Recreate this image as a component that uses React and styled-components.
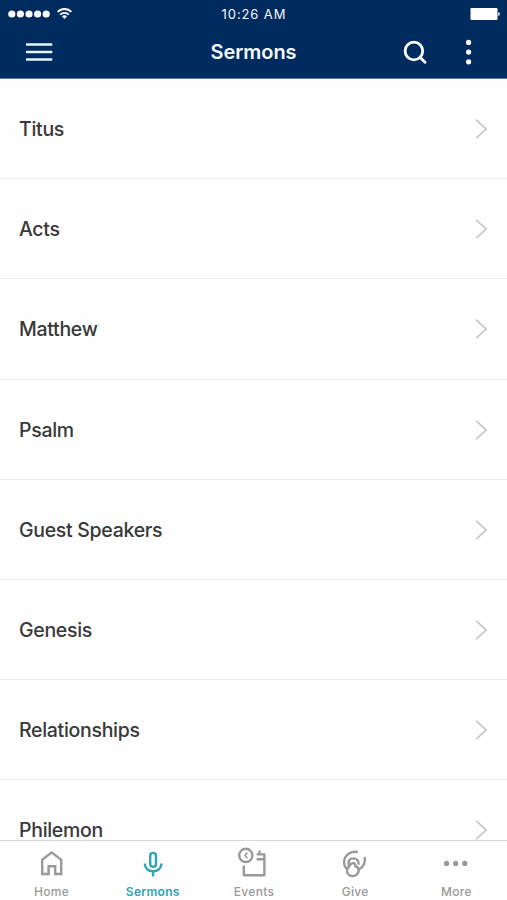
import React from 'react';
import styled, { createGlobalStyle } from 'styled-components';

const GlobalStyle = createGlobalStyle`
    * {
        box-sizing: border-box;
    }
    body {
        margin: 0;
        background: #fefefe;
        font-family: Inter, "Liberation Sans", sans-serif;
    }
`;

const Screen = styled.div`
    display: flex;
    flex-direction: column;
    height: 100vh;
    overflow: hidden;
`;

const Header = styled.header`
    flex: none;
    height: 79px;
    background: #002b5f;
    border-bottom: 1px solid #5f7f9f;
    color: #f3f8ff;
`;

const StatusBar = styled.div`
    display: grid;
    grid-template-columns: 1fr auto 1fr;
    align-items: center;
    height: 27px;
    padding: 0 7px 0 8px;
`;

const Signal = styled.div`
    display: flex;
    align-items: center;
    gap: 7px;
`;

const Time = styled.div`
    font-size: 13px;
    font-weight: 400;
    letter-spacing: 0.9px;
    line-height: 16px;
`;

const Battery = styled.svg`
    justify-self: end;
`;

const NavBar = styled.div`
    display: grid;
    grid-template-columns: 1fr auto 1fr;
    align-items: center;
    height: 50px;
    padding: 0 34px 0 25px;
`;

const Title = styled.h1`
    margin: 0;
    padding-left: 9px;
    font-size: 20px;
    font-weight: 600;
    line-height: 24px;
    letter-spacing: -0.05px;
`;

const Actions = styled.div`
    display: flex;
    justify-content: flex-end;
    align-items: center;
    gap: 38px;
`;

const List = styled.ul`
    flex: 1;
    min-height: 0;
    margin: 0;
    padding: 0;
    overflow: hidden;
    list-style: none;
`;

const Row = styled.li`
    display: flex;
    justify-content: space-between;
    align-items: center;
    height: 100.2px;
    padding: 1px 19px 0 19px;
    border-bottom: 1px solid #ebebeb;
    color: #383838;
    font-size: 19.5px;
    font-weight: 500;
    letter-spacing: -0.3px;
    line-height: 24px;
`;

const TabBar = styled.nav`
    flex: none;
    display: grid;
    grid-template-columns: repeat(5, 1fr);
    height: 60px;
    padding-left: 1px;
    border-top: 1px solid #d8d8d8;
`;

const Tab = styled.div`
    display: flex;
    flex-direction: column;
    align-items: center;
    padding-top: 5px;
    color: ${(props) => (props.$active ? '#2fa5b5' : '#999')};
    font-size: 12px;
    font-weight: ${(props) => (props.$active ? 600 : 500)};
    letter-spacing: 0.3px;
    line-height: 16px;
`;

const TabIcon = styled.svg`
    display: block;
    width: 36px;
    height: 36px;
    margin-bottom: 2px;
    fill: none;
    stroke: currentColor;
    stroke-width: 2.4;
`;

const sermons = ['Titus', 'Acts', 'Matthew', 'Psalm', 'Guest Speakers', 'Genesis', 'Relationships', 'Philemon'];

const tabs = [
    {
        label: 'Home',
        icon: <path d="M8.2 13.8 17.7 6.4 27.2 13.8V28H21.2V20.2H14.6V28H8.2Z" />,
    },
    {
        label: 'Sermons',
        active: true,
        icon: (
            <>
                <rect x="15.2" y="6.9" width="5.8" height="14" rx="2.9" />
                <path d="M9.8 17.5C9.8 22.5 13.5 25.2 18.1 25.2S26.4 22.5 26.4 17.5M18.1 25.2V30.5" />
            </>
        ),
    },
    {
        label: 'Events',
        icon: (
            <>
                <circle cx="9.8" cy="9.4" r="6.6" />
                <path d="M11.4 6.6 9 9.4 11.4 12.2" strokeWidth="1.6" />
                <path d="M7.8 19.5V29.2H28.4V8.4H20.6M23.6 4.6V8.4M20.6 13.2H28.4" strokeLinejoin="round" />
            </>
        ),
    },
    {
        label: 'Give',
        icon: (
            <>
                <path d="M20.8 6C13 4.4 7.1 10 7.1 16.3C7.1 19.6 8.4 22 10.8 23.8" />
                <path d="M12.2 20C10.2 15 13 12.2 16.6 12.4C20 12.6 22.2 15.2 21.4 18.8" />
                <path d="M12.4 19.8C14.4 17 17.2 16 18.2 18.6C18.4 19.4 18.2 20 17.6 20.6" />
                <path d="M13 20.2C9.6 21.6 9.2 26 11.4 28.4C14 31 18.8 30.6 20.8 27.4C21.6 26 21.8 24.8 21.6 23.6C25.8 21.6 28.4 16.8 27.8 10.8" />
                <path d="M17.6 20.6C20 20.2 21.4 21.6 21.6 23.6" />
            </>
        ),
    },
    {
        label: 'More',
        icon: (
            <g fill="currentColor" stroke="none">
                <circle cx="8.6" cy="17.4" r="2.6" />
                <circle cx="17.7" cy="17.4" r="2.6" />
                <circle cx="26.8" cy="17.4" r="2.6" />
            </g>
        ),
    },
];

const App = () => {
    return (
        <Screen>
            <GlobalStyle />
            <Header>
                <StatusBar>
                    <Signal>
                        <svg width="42" height="8" fill="#fff">
                            {[3.8, 12.4, 21, 29.6, 38.2].map((x) => (
                                <circle key={x} cx={x} cy="4" r="3.6" />
                            ))}
                        </svg>
                        <svg width="15" height="13" viewBox="0 0 15 13" fill="none" stroke="#fff" strokeWidth="1.9">
                            <path d="M.7 4.9C4.5 1 10.5 1 14.3 4.9M3.2 7.7C5.6 5.3 9.4 5.3 11.8 7.7" />
                            <path d="M7.5 12 4.9 9.3C6.4 8 8.6 8 10.1 9.3Z" fill="#fff" stroke="none" />
                        </svg>
                    </Signal>
                    <Time>10:26 AM</Time>
                    <Battery width="30" height="12" fill="#fff">
                        <rect x="0.5" width="27" height="12" rx="1" />
                        <path d="M28.3 4C30.3 4.5 30.3 7.5 28.3 8Z" />
                    </Battery>
                </StatusBar>
                <NavBar>
                    <svg width="28" height="20" stroke="#eaf6ff" strokeWidth="2.4" strokeLinecap="round">
                        <path d="M2 2.5H26.3M2 10H26.3M2 17.5H26.3" />
                    </svg>
                    <Title>Sermons</Title>
                    <Actions>
                        <svg width="24" height="24" fill="none" stroke="#fff" strokeWidth="2.8" strokeLinecap="round">
                            <circle cx="10.9" cy="11" r="8.8" />
                            <path d="M17.5 17.8 22 22.2" />
                        </svg>
                        <svg width="8" height="26" fill="#fff">
                            <circle cx="3.6" cy="3.4" r="2.6" />
                            <circle cx="3.6" cy="13.1" r="2.6" />
                            <circle cx="3.6" cy="22.8" r="2.6" />
                        </svg>
                    </Actions>
                </NavBar>
            </Header>
            <List>
                {sermons.map((name) => (
                    <Row key={name}>
                        {name}
                        <svg width="13" height="20" fill="none" stroke="#c8c8c8" strokeWidth="1.7">
                            <path d="M1.2 .8 11.2 10 1.2 19.2" />
                        </svg>
                    </Row>
                ))}
            </List>
            <TabBar>
                {tabs.map(({ label, active, icon }) => (
                    <Tab key={label} $active={active}>
                        <TabIcon viewBox="0 0 36 36">{icon}</TabIcon>
                        {label}
                    </Tab>
                ))}
            </TabBar>
        </Screen>
    );
};

export default App;
